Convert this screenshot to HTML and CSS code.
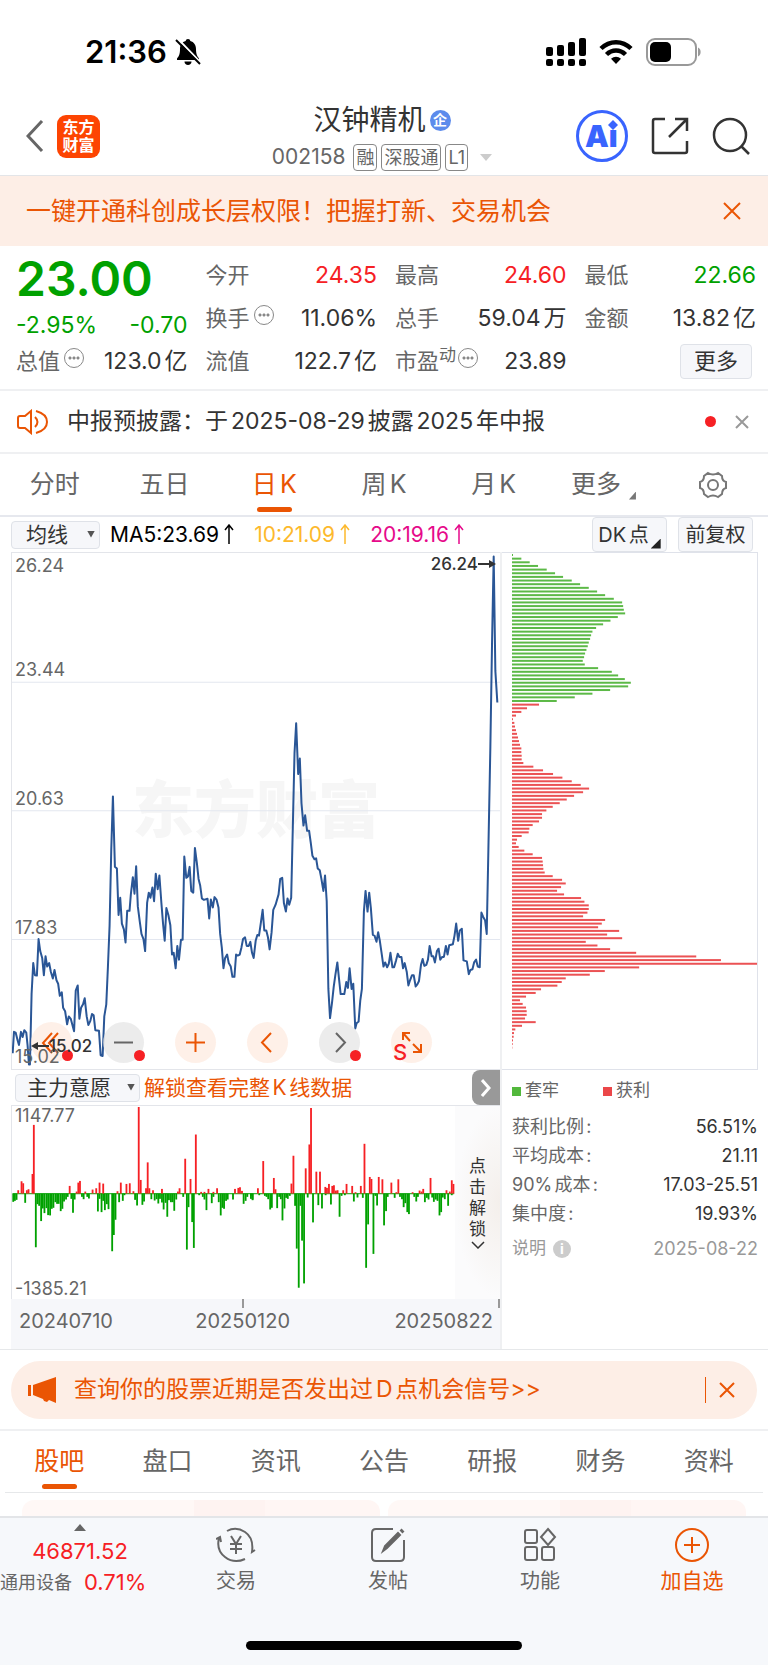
FILE: index.html
```html
<!DOCTYPE html>
<html lang="zh-CN">

<head>
    <meta charset="UTF-8">
    <meta name="viewport" content="width=device-width, initial-scale=1.0">
    <title>汉钟精机 002158</title>
    <link rel="stylesheet" href="styles.css">
</head>

<body>

    <!-- Status bar -->
    <div class="status-bar">
        <div class="clock">
            <span>21:36</span>
            <svg width="26" height="28" viewBox="0 0 26 28">
                <path d="M13 1c-1.400 0-2.200.9-2.300 2C7 4 5 7 5 11c0 5-1 7-3 9.500v1.500h22v-1.500c-2-2.500-3-4.500-3-9.500 0-4-2-7-5.700-8C15.200 1.900 14.400 1 13 1z" />
                <path d="M9.500 23.500h7c0 2-1.500 3.500-3.500 3.500s-3.500-1.500-3.500-3.500z" />
                <path d="M3 1l23 24" stroke="#fff" stroke-width="2" />
                <path d="M1 2l24 24" stroke="#000" stroke-width="2" />
            </svg>
        </div>
        <div class="system-icons">
            <svg width="40" height="28" viewBox="0 0 40 28">
                <rect x="0" y="9" width="7" height="9" rx="2" />
                <rect x="11" y="7" width="7" height="11" rx="2" />
                <rect x="22" y="4" width="7" height="14" rx="2" />
                <rect x="33" y="0" width="7" height="18" rx="2" />
                <rect x="0" y="21" width="7" height="7" rx="2" />
                <rect x="11" y="21" width="7" height="7" rx="2" />
                <rect x="22" y="21" width="7" height="7" rx="2" />
                <rect x="33" y="21" width="7" height="7" rx="2" />
            </svg>
            <svg width="34" height="26" viewBox="0 0 34 26" fill="none" stroke="#000" stroke-width="4.500">
                <path d="M2 9.500C10.500 1 23.500 1 32 9.500" />
                <path d="M7.500 15.500c5.500-5.300 13.500-5.300 19 0" />
                <path d="M17 25l-5-5.200c3-2.700 7-2.700 10 0z" fill="#000" stroke="none" />
            </svg>
            <svg width="56" height="28" viewBox="0 0 56 28">
                <rect x="1" y="1" width="49" height="26" rx="8" fill="none" stroke="#999" stroke-width="2" />
                <rect x="4" y="4" width="21" height="20" rx="5" />
                <path d="M52 9.500c3.500 1.500 3.500 7.500 0 9z" fill="#999" />
            </svg>
        </div>
    </div>

    <!-- Stock header -->
    <header class="header">
        <div class="header-left">
            <button class="icon-button" aria-label="返回">
                <svg width="18" height="32" viewBox="0 0 18 32" fill="none" stroke="#666" stroke-width="3">
                    <path d="M16 1L2 16l14 15" />
                </svg>
            </button>
            <div class="logo"><span>东方</span><span>财富</span></div>
        </div>
        <div class="stock">
            <h1>汉钟精机<span class="badge">企</span></h1>
            <div class="stock-code">
                <span class="code">002158</span>
                <span class="tag">融</span>
                <span class="tag">深股通</span>
                <span class="tag">L1</span>
                <svg class="code-arrow" width="12" height="7" viewBox="0 0 12 7">
                    <path d="M0 0h12L6 7z" fill="#ccc" />
                </svg>
            </div>
        </div>
        <div class="header-right">
            <button class="icon-button" aria-label="AI">
                <svg width="52" height="52" viewBox="0 0 52 52">
                    <circle cx="26" cy="26" r="24.500" fill="none" stroke="#3964fe" stroke-width="3" />
                    <text x="9" y="37" class="ai-text">Ai</text>
                    <circle cx="37" cy="14" r="6" fill="#fff" />
                    <path d="M37 10l5 5-5 5-5-5z" fill="#3964fe" />
                </svg>
            </button>
            <button class="icon-button" aria-label="分享">
                <svg width="38" height="38" viewBox="0 0 38 38" fill="none" stroke="#333" stroke-width="2.500">
                    <path d="M14 2H4q-2 0-2 2v30q0 2 2 2h30q2 0 2-2V24" />
                    <path d="M24 2h12v12M36 2L18 20" />
                </svg>
            </button>
            <button class="icon-button" aria-label="搜索">
                <svg width="38" height="38" viewBox="0 0 38 38" fill="none" stroke="#333" stroke-width="2.500">
                    <circle cx="18" cy="18" r="16" />
                    <path d="M29 29l8 8" />
                </svg>
            </button>
        </div>
    </header>

    <div class="promo">
        <a href="#">一键开通科创成长层权限！把握打新、交易机会</a>
        <button class="icon-button" aria-label="关闭">
            <svg width="18" height="18" viewBox="0 0 18 18" stroke="#ea5504" stroke-width="2">
                <path d="M1 1l16 16M17 1L1 17" />
            </svg>
        </button>
    </div>

    <!-- Quote -->
    <section class="quote">
        <div class="price-box">
            <div class="price">23.00</div>
            <div class="change"><span>-2.95%</span><span>-0.70</span></div>
        </div>
        <div class="item"><span class="label">今开</span><span class="up">24.35</span></div>
        <div class="item"><span class="label">最高</span><span class="up">24.60</span></div>
        <div class="item"><span class="label">最低</span><span class="down">22.66</span></div>
        <div class="item"><span class="label">换手<i class="dots"></i></span><span>11.06%</span></div>
        <div class="item"><span class="label">总手</span><span>59.04万</span></div>
        <div class="item"><span class="label">金额</span><span>13.82亿</span></div>
        <div class="item"><span class="label">总值<i class="dots"></i></span><span>123.0亿</span></div>
        <div class="item"><span class="label">流值</span><span>122.7亿</span></div>
        <div class="item"><span class="label">市盈<small>动</small><i class="dots"></i></span><span>23.89</span></div>
        <div class="item item-more"><button class="more-button">更多</button></div>
    </section>

    <div class="notice">
        <svg width="32" height="26" viewBox="0 0 32 26" fill="none" stroke="#ea5504" stroke-width="2">
            <path d="M14 2v22l-6-5H3q-2 0-2-2V9q0-2 2-2h5z" />
            <path d="M18 8q5 5 0 10M19 2q11 3 11 11T19 24" />
        </svg>
        <a href="#">中报预披露：于2025-08-29披露2025年中报</a>
        <i class="red-dot"></i>
        <button class="icon-button" aria-label="关闭">
            <svg width="14" height="14" viewBox="0 0 14 14" stroke="#999" stroke-width="2">
                <path d="M1 1l12 12M13 1L1 13" />
            </svg>
        </button>
    </div>

    <nav class="tabs period-tabs">
        <a href="#">分时</a>
        <a href="#">五日</a>
        <a href="#" class="active">日K</a>
        <a href="#">周K</a>
        <a href="#">月K</a>
        <a href="#" class="tab-more">更多</a>
        <a href="#" aria-label="设置">
            <svg width="30" height="28" viewBox="0 0 30 28" fill="none" stroke="#777" stroke-width="2">
                <path d="M10 2q5 3 10 0l4 3q0 5 4 6v6q-4 1-4 6l-4 3q-5-3-10 0l-4-3q0-5-4-6v-6q4-1 4-6z" />
                <circle cx="15" cy="14" r="5" />
            </svg>
        </a>
    </nav>

    <!-- Moving averages -->
    <div class="ma-bar">
        <label class="select-box">
            <select aria-label="指标">
                <option>均线</option>
            </select>
        </label>
        <span class="ma5">MA5:23.69<svg class="up-arrow" viewBox="0 0 10 20"><path d="M5 20V1M1 6l4-5 4 5" /></svg></span>
        <span class="ma10">10:21.09<svg class="up-arrow" viewBox="0 0 10 20"><path d="M5 20V1M1 6l4-5 4 5" /></svg></span>
        <span class="ma20">20:19.16<svg class="up-arrow" viewBox="0 0 10 20"><path d="M5 20V1M1 6l4-5 4 5" /></svg></span>
        <div class="ma-buttons">
            <button class="dk-button">DK点</button>
            <button>前复权</button>
        </div>
    </div>

    <div class="charts">
        <div class="charts-left">
            <div class="kline">
                <div class="watermark">东方财富</div>
                <svg class="plot" viewBox="33 37 1470 1501" preserveAspectRatio="none" id="kline">
                    <g class="grid">
                        <path d="M33 413H1503M33 787H1503M33 1161H1503" />
                    </g>
                </svg>
                <div class="tools">
                    <button class="tool has-dot" aria-label="最早">
                        <svg viewBox="0 0 41 41"><path d="M21 11l-9 10 9 10M27 11l-9 10 9 10" /></svg>
                    </button>
                    <button class="tool grey has-dot" aria-label="缩小">
                        <svg viewBox="0 0 41 41"><path d="M11 20.500h19" /></svg>
                    </button>
                    <button class="tool" aria-label="放大">
                        <svg viewBox="0 0 41 41"><path d="M11 20.500h19M20.500 11v19" /></svg>
                    </button>
                    <button class="tool" aria-label="向左">
                        <svg viewBox="0 0 41 41"><path d="M24 11l-9 9.500 9 9.500" /></svg>
                    </button>
                    <button class="tool grey has-dot" aria-label="向右">
                        <svg viewBox="0 0 41 41"><path d="M17 11l9 9.500-9 9.500" /></svg>
                    </button>
                    <button class="tool" aria-label="全屏">
                        <svg viewBox="0 0 41 41"><path d="M12 18v-7h7M12 11l7 8M30 22v8h-8M30 30l-8-8" /></svg>
                        <b>S</b>
                    </button>
                </div>
                <span class="scale s1">26.24</span>
                <span class="scale s2">23.44</span>
                <span class="scale s3">20.63</span>
                <span class="scale s4">17.83</span>
                <span class="scale s5">15.02</span>
                <span class="mark mark-high">26.24<svg width="18" height="8" viewBox="0 0 18 8"><path d="M0 4h14" stroke="#333" stroke-width="2" /><path d="M11 0l7 4-7 4z" fill="#333" /></svg></span>
                <span class="mark mark-low"><svg width="18" height="8" viewBox="0 0 18 8"><path d="M4 4h14" stroke="#333" stroke-width="2" /><path d="M7 0L0 4l7 4z" fill="#333" /></svg>15.02</span>
            </div>

            <div class="indicator-bar">
                <label class="select-box wide">
                    <select aria-label="副图指标">
                        <option>主力意愿</option>
                    </select>
                </label>
                <a href="#">解锁查看完整K线数据</a>
                <button class="expand" aria-label="展开">
                    <svg width="10" height="18" viewBox="0 0 10 18" fill="none" stroke="#fff" stroke-width="3">
                        <path d="M1 1l7 8-7 8" />
                    </svg>
                </button>
            </div>

            <div class="flow">
                <svg class="plot" viewBox="33 226 1470 582" preserveAspectRatio="none" id="flow"></svg>
                <span class="scale flow-max">1147.77</span>
                <span class="scale flow-min">-1385.21</span>
                <button class="unlock">
                    <span>点击解锁</span>
                    <svg width="14" height="8" viewBox="0 0 14 8" fill="none" stroke="#333" stroke-width="1.500">
                        <path d="M1 1l6 6 6-6" />
                    </svg>
                </button>
            </div>

            <div class="dates">
                <span>20240710</span>
                <span class="mid-date">20250120</span>
                <span>20250822</span>
            </div>
        </div>

        <div class="charts-right">
            <div class="chips">
                <svg viewBox="0 0 734 1551" preserveAspectRatio="none" id="chips"></svg>
            </div>
            <div class="legend">
                <span class="legend-green">套牢</span>
                <span class="legend-red">获利</span>
            </div>
            <dl class="chip-stats">
                <div><dt>获利比例:</dt><dd>56.51%</dd></div>
                <div><dt>平均成本:</dt><dd>21.11</dd></div>
                <div><dt>90%成本:</dt><dd>17.03-25.51</dd></div>
                <div><dt>集中度:</dt><dd>19.93%</dd></div>
            </dl>
            <div class="chip-note">
                <span>说明<i class="info">i</i></span>
                <span class="chip-date">2025-08-22</span>
            </div>
        </div>
    </div>

    <div class="signal-wrap">
        <div class="signal">
            <svg width="28" height="26" viewBox="0 0 28 26" fill="#ea5504">
                <path d="M0 8h3v11H0zM5 8L28 0v26l-7-3-2 2-3-1-1-2-10-4z" />
            </svg>
            <a href="#">查询你的股票近期是否发出过D点机会信号&gt;&gt;</a>
            <button class="icon-button" aria-label="关闭">
                <svg width="16" height="16" viewBox="0 0 16 16" stroke="#ea5504" stroke-width="2">
                    <path d="M1 1l14 14M15 1L1 15" />
                </svg>
            </button>
        </div>
    </div>

    <nav class="tabs info-tabs">
        <a href="#" class="active">股吧</a>
        <a href="#">盘口</a>
        <a href="#">资讯</a>
        <a href="#">公告</a>
        <a href="#">研报</a>
        <a href="#">财务</a>
        <a href="#">资料</a>
    </nav>

    <div class="cards">
        <div class="card"></div>
        <div class="card"></div>
    </div>

    <!-- Bottom bar -->
    <footer class="bottom">
        <nav class="bottom-nav">
            <a href="#" class="index">
                <svg width="12" height="7" viewBox="0 0 12 7"><path d="M0 7h12L6 0z" fill="#666" /></svg>
                <span class="index-value">46871.52</span>
                <span class="index-row"><span>通用设备</span><span class="index-value">0.71%</span></span>
            </a>
            <a href="#">
                <svg width="40" height="36" viewBox="0 0 40 36">
                    <path d="M11 4Q20-1 29 5t7 20l3-2M3 11q-3 12 6 19t20 2M0 12l4-2 1 5" />
                    <path d="M15 9l5 8 5-8M20 17v10M14 17h12M14 22h12" />
                </svg>
                交易
            </a>
            <a href="#">
                <svg width="36" height="36" viewBox="0 0 36 36">
                    <path d="M23 2H6Q2 2 2 6v24q0 4 4 4h24q4 0 4-4V13" />
                    <path d="M13 24l2-5L28 6l2 2-13 13z" fill="#666" />
                    <path d="M31 5l2-2" stroke-width="4" />
                </svg>
                发帖
            </a>
            <a href="#">
                <svg width="36" height="36" viewBox="0 0 36 36">
                    <rect x="3" y="3" width="12" height="13" rx="2" />
                    <rect x="3" y="20" width="12" height="13" rx="2" />
                    <rect x="20" y="20" width="12" height="13" rx="2" />
                    <path d="M26 2l7 8-7 8-7-8z" />
                </svg>
                功能
            </a>
            <a href="#" class="add">
                <svg width="36" height="36" viewBox="0 0 36 36">
                    <circle cx="18" cy="18" r="16" />
                    <path d="M10 18h16M18 10v16" />
                </svg>
                加自选
            </a>
        </nav>
        <div class="home-indicator"></div>
    </footer>

    <script src="charts.js"></script>
</body>

</html>
```
FILE: styles.css
```css
* {
    box-sizing: border-box;
    margin: 0;
    padding: 0;
}

body {
    font-family: Inter, "Noto Sans CJK SC", sans-serif;
    font-size: 22px;
    line-height: 1.3;
    color: #333;
    background-color: #fff;
    text-autospace: normal;
    overflow-x: hidden;
}

a {
    color: inherit;
    text-decoration: none;
}

button,
select {
    font: inherit;
    color: inherit;
    border: none;
    background: none;
    text-autospace: normal;
}

i {
    font-style: normal;
}

svg {
    display: block;
    flex-shrink: 0;
}

.icon-button {
    display: flex;
}

/* Status bar */
.status-bar {
    display: flex;
    justify-content: space-between;
    align-items: center;
    height: 96px;
    padding: 8px 66px 0 85px;
}

.clock,
.system-icons {
    display: flex;
    align-items: center;
}

.clock {
    gap: 8px;
    color: #000;
    font-size: 31px;
    font-weight: 600;
}

.system-icons {
    gap: 13px;
}

/* Header */
.header {
    display: grid;
    grid-template-columns: 1fr auto 1fr;
    align-items: center;
    height: 80px;
    padding: 0 18px 0 14px;
    border-bottom: 1px solid #e3e5e8;
}

.header-left,
.header-right {
    display: flex;
    align-items: center;
}

.header-left {
    gap: 13px;
    padding-left: 12px;
}

.header-right {
    gap: 23px;
    justify-content: flex-end;
}

.logo {
    display: flex;
    flex-direction: column;
    justify-content: center;
    align-items: center;
    width: 43px;
    height: 43px;
    border-radius: 9px;
    background-color: #fd4402;
    color: #fff;
    font-size: 16px;
    font-weight: 700;
    line-height: 18px;
}

.stock {
    padding-top: 6px;
}

.stock h1 {
    display: flex;
    justify-content: center;
    align-items: center;
    gap: 4px;
    font-size: 28px;
    font-weight: 400;
    line-height: 36px;
}

.badge {
    width: 21px;
    height: 21px;
    border-radius: 50%;
    background-color: #5c8bec;
    color: #fff;
    font-size: 14px;
    font-weight: 700;
    line-height: 20px;
    text-align: center;
}

.stock-code {
    display: flex;
    align-items: center;
    gap: 4px;
    height: 38px;
    color: #666;
    font-size: 21px;
}

.code {
    margin-right: 4px;
}

.tag {
    padding: 0 2px;
    border: 1px solid #888;
    border-radius: 4px;
    font-size: 18px;
    line-height: 25px;
}

.code-arrow {
    margin-left: 8px;
}

.ai-text {
    fill: #3964fe;
    font-size: 30px;
    font-weight: 900;
}

.promo {
    display: flex;
    justify-content: space-between;
    align-items: center;
    height: 70px;
    padding: 0 27px 0 26px;
    background-color: #fdeee6;
    color: #ea5504;
    font-size: 25px;
}

/* Quote */
.quote {
    display: grid;
    grid-template-columns: repeat(4, 1fr);
    grid-template-rows: repeat(3, 43px);
    column-gap: 18px;
    padding: 8px 12px 6px 16px;
    border-bottom: 2px solid #eff0f2;
    font-size: 23px;
}

.price-box {
    display: flex;
    flex-direction: column;
    justify-content: space-between;
    grid-row: span 2;
    color: #00a100;
}

.price {
    font-size: 48px;
    font-weight: 600;
    line-height: 50px;
}

.change {
    display: flex;
    justify-content: space-between;
    line-height: 30px;
}

.item {
    display: flex;
    justify-content: space-between;
    align-items: center;
    white-space: nowrap;
}

.label {
    display: flex;
    align-items: center;
    color: #666;
    font-size: 22px;
}

.label small {
    margin-bottom: 12px;
    font-size: 17px;
}

.dots {
    width: 20px;
    height: 20px;
    margin: 0 0 8px 4px;
    border: 1px solid #888;
    border-radius: 50%;
    background: radial-gradient(circle, #888 1px, transparent 2px) center / 4px 18px repeat-x content-box;
    padding: 0 3px;
}

.label small + .dots {
    margin-left: 2px;
}

.up,
.index-value {
    color: #f62024;
}

.down {
    color: #00a100;
}

.item-more {
    justify-content: flex-end;
    padding-right: 4px;
}

.more-button {
    height: 35px;
    padding: 0 13px;
    border: 1px solid #dfe2e8;
    border-radius: 4px;
    background-color: #f6f7fa;
    font-size: 22px;
}

.notice {
    display: flex;
    align-items: center;
    height: 63px;
    padding: 0 19px 0 17px;
    border-bottom: 2px solid #eff0f2;
    font-size: 23px;
}

.notice a {
    flex: 1;
    margin-left: 18px;
}

.red-dot {
    width: 11px;
    height: 11px;
    margin-right: 19px;
    border-radius: 50%;
    background-color: #f62024;
}

/* Tabs */
.tabs {
    display: grid;
    grid-template-columns: repeat(7, 1fr);
    height: 63px;
    color: #666;
    font-size: 25px;
}

.tabs a {
    position: relative;
    display: flex;
    justify-content: center;
    align-items: center;
}

.tabs .active {
    color: #ea5504;
}

.active::after {
    content: "";
    position: absolute;
    bottom: 3px;
    width: 35px;
    height: 5px;
    border-radius: 3px;
    background-color: #ea5504;
}

.period-tabs {
    border-bottom: 2px solid #e6e8ee;
}

.tab-more::after,
.dk-button::after {
    content: "";
    width: 7px;
    height: 8px;
    margin: 22px 0 0 8px;
    background-color: #777;
    clip-path: polygon(100% 0, 100% 100%, 0 100%);
}

/* Moving averages */
.ma-bar {
    display: flex;
    align-items: center;
    gap: 20px;
    height: 35px;
    padding: 0 15px 0 11px;
    font-size: 21px;
    white-space: nowrap;
}

.ma-bar span {
    display: flex;
    align-items: center;
    gap: 5px;
}

.ma-bar .ma5 {
    margin-left: -10px;
    color: #000;
}

.ma10 {
    color: #fdb92c;
}

.ma20 {
    color: #e60a8a;
}

.up-arrow {
    width: 10px;
    height: 20px;
    fill: none;
    stroke: currentColor;
    stroke-width: 1.5;
}

.select-box {
    position: relative;
    width: 89px;
}

.select-box.wide {
    width: 125px;
}

.select-box select {
    display: block;
    width: 100%;
    height: 28px;
    padding-left: 14px;
    border: 1px solid #dfe2e8;
    border-radius: 4px;
    background-color: #f6f7fa;
    appearance: none;
    font-size: 21px;
    line-height: 26px;
}

.select-box.wide select {
    padding-left: 11px;
}

.select-box::after {
    content: "";
    position: absolute;
    top: 10px;
    right: 5px;
    width: 8px;
    height: 7px;
    background-color: #555;
    clip-path: polygon(0 0, 100% 0, 50% 100%);
}

.ma-buttons {
    display: flex;
    gap: 11px;
    margin-left: auto;
}

.ma-buttons button {
    display: flex;
    justify-content: center;
    align-items: center;
    width: 75px;
    height: 35px;
    border: 1px solid #dfe2e8;
    border-radius: 4px;
    background-color: #f6f7fa;
    font-size: 20px;
}

.dk-button::after {
    width: 10px;
    height: 10px;
    margin: 18px 0 0 2px;
    background-color: #222;
}

/* Charts */
.charts {
    display: grid;
    grid-template-columns: 491fr 256fr;
    margin: 0 10px 0 11px;
}

.charts-left {
    border-right: 2px solid #eff0f2;
}

.kline,
.flow {
    position: relative;
    border-top: 1px solid #e3e5ea;
    border-left: 1px solid #e3e5ea;
}

.kline {
    height: 518px;
    border-bottom: 1px solid #e3e5ea;
}

.flow {
    height: 194px;
}

.plot {
    position: relative;
    width: 100%;
    height: 100%;
}

.grid path {
    fill: none;
    stroke: #e3e7f0;
    stroke-width: 1;
    vector-effect: non-scaling-stroke;
}

.price-line {
    fill: none;
    stroke: #2a5696;
    stroke-width: 2;
    stroke-linejoin: round;
    vector-effect: non-scaling-stroke;
}

.watermark {
    position: absolute;
    top: 213px;
    left: 120px;
    color: #f6f6f6;
    font-size: 62px;
    font-weight: 900;
    line-height: 90px;
}

.scale {
    position: absolute;
    left: 3px;
    color: #666;
    font-size: 18px;
    line-height: 20px;
}

.s1 {
    top: 3px;
}

.s2 {
    top: 107px;
}

.s3 {
    top: 236px;
}

.s4 {
    top: 365px;
}

.s5 {
    bottom: 2px;
}

.flow-max {
    top: 0;
}

.flow-min {
    bottom: 0;
}

.mark {
    position: absolute;
    display: flex;
    align-items: center;
    color: #333;
    font-size: 17px;
    font-weight: 500;
    line-height: 20px;
}

.mark-high {
    top: 1px;
    right: 4px;
}

.mark-low {
    bottom: 13px;
    left: 19px;
}

.tools {
    position: absolute;
    bottom: 6px;
    left: 19px;
    display: flex;
    gap: 31px;
}

.tool {
    position: relative;
    width: 41px;
    height: 41px;
    border-radius: 50%;
    background-color: rgba(253, 234, 222, 0.7);
}

.tool.grey {
    background-color: rgba(228, 228, 228, 0.7);
}

.tool svg {
    fill: none;
    stroke: #ea5504;
    stroke-width: 2;
}

.tool.grey svg {
    stroke: #666;
}

.has-dot::after {
    content: "";
    position: absolute;
    right: -1px;
    bottom: 2px;
    width: 11px;
    height: 11px;
    border-radius: 50%;
    background-color: #f62024;
}

.tool b {
    position: absolute;
    bottom: -4px;
    left: 2px;
    color: #f62024;
    font-size: 22px;
    font-weight: 500;
}

.indicator-bar {
    display: flex;
    align-items: center;
    gap: 4px;
    height: 35px;
    padding-left: 4px;
    color: #ea5504;
    font-size: 21px;
}

.indicator-bar select {
    color: #333;
}

.expand {
    display: flex;
    justify-content: center;
    align-items: center;
    width: 28px;
    height: 35px;
    margin-left: auto;
    border-radius: 8px 0 0 8px;
    background-color: #999;
}

.unlock {
    position: absolute;
    top: 0;
    right: 0;
    display: flex;
    flex-direction: column;
    justify-content: center;
    align-items: center;
    gap: 1px;
    width: 45px;
    height: 100%;
    background: radial-gradient(ellipse at center right, #f4efeb, #fbfbfc 70%);
}

.unlock span {
    width: 18px;
    font-size: 17px;
    line-height: 21px;
}

.dates {
    display: flex;
    justify-content: space-between;
    height: 50px;
    padding: 0 7px 0 8px;
    background:
        linear-gradient(#999, #999) 47.5% 0 / 2px 9px no-repeat,
        linear-gradient(#999, #999) right 0 top 0 / 2px 9px no-repeat,
        #f6f7fa;
    color: #666;
    font-size: 20px;
    line-height: 44px;
}

.mid-date {
    margin-right: 22px;
}

.charts-right {
    padding-left: 10px;
    font-size: 17px;
}

.chips {
    height: 518px;
    margin-left: -10px;
    padding-left: 10px;
    border: 1px solid #dfe2ea;
    border-left: none;
}

.chips svg {
    width: 100%;
    height: 100%;
}

.legend {
    display: flex;
    gap: 44px;
    height: 42px;
    color: #666;
    line-height: 40px;
}

.legend span::before {
    content: "";
    display: inline-block;
    width: 9px;
    height: 9px;
    margin-right: 4px;
    background-color: #52b83c;
}

.legend .legend-red::before {
    background-color: #eb4749;
}

.chip-stats div,
.chip-note {
    display: flex;
    justify-content: space-between;
    line-height: 29px;
}

.chip-stats,
.chip-date {
    font-size: 18px;
}

.chip-stats dt {
    color: #666;
}

.chip-note {
    margin-top: 6px;
    color: #999;
}

.chip-note span {
    display: flex;
    align-items: center;
}

.info {
    width: 18px;
    height: 18px;
    margin-left: 7px;
    border-radius: 50%;
    background-color: #ccc;
    color: #fff;
    font-size: 14px;
    font-weight: 700;
    line-height: 18px;
    text-align: center;
}

/* Signal banner */
.signal-wrap {
    padding: 11px 11px 10px;
    border-top: 1px solid #e6e8ea;
    border-bottom: 2px solid #eff0f2;
}

.signal {
    display: flex;
    align-items: center;
    height: 58px;
    padding: 0 22px 0 17px;
    border-radius: 29px;
    background-color: #fdeee6;
    color: #ea5504;
    font-size: 23px;
}

.signal a {
    flex: 1;
    margin-left: 18px;
}

.signal .icon-button {
    padding: 5px 0 5px 13px;
    border-left: 1px solid #ea5504;
}

.info-tabs {
    height: 62px;
    margin: 0 5px;
    border-bottom: 1px solid #e6e8ea;
}

.cards {
    display: grid;
    grid-template-columns: 1fr 1fr;
    gap: 8px;
    padding: 7px 22px 0;
}

.card {
    height: 16px;
    border-radius: 12px 12px 0 0;
    background: linear-gradient(90deg, #fff8f6 48%, #fef3f1 48%, #fef3f1 68%, #fff6f4 68%);
}

/* Bottom bar */
.bottom {
    height: 149px;
    border-top: 2px solid #e3e5e8;
    background-color: #f6f8fb;
}

.bottom-nav {
    display: grid;
    grid-template-columns: 160fr 152fr 152fr 152fr 152fr;
    height: 123px;
}

.bottom-nav a {
    display: flex;
    flex-direction: column;
    align-items: center;
    padding-top: 9px;
    color: #666;
    font-size: 20px;
    line-height: 36px;
}

.bottom-nav a > svg {
    fill: none;
    stroke: #666;
    stroke-width: 2;
}

.bottom-nav .add {
    color: #ea5504;
    font-size: 21px;
}

.bottom-nav .add svg {
    stroke: #ea5504;
}

.bottom-nav .index {
    padding-top: 6px;
    line-height: 31px;
}

.bottom-nav .index svg {
    margin-bottom: 5px;
    stroke: none;
}

.index-value {
    font-size: 22px;
}

.index-row {
    display: flex;
    gap: 12px;
    align-self: flex-start;
    font-size: 18px;
    white-space: nowrap;
}

.home-indicator {
    width: 36%;
    height: 9px;
    margin: 0 auto;
    border-radius: 5px;
    background-color: #000;
}
```
FILE: charts.js
```js
const SVG = 'http://www.w3.org/2000/svg';

function add(parent, tag, attrs) {
    const el = document.createElementNS(SVG, tag);
    for (const key in attrs) el.setAttribute(key, attrs[key]);
    parent.appendChild(el);
}

// Each series is split in two pages, the second one starts PAGE units further
const PAGE = 750;

function parse(first, second) {
    const read = (text, offset) => text.trim().split(/\s+/).map(p => {
        const [x, y] = p.split(',').map(Number);
        return [x + offset, y];
    });
    return read(first, 0).concat(read(second, PAGE));
}

// Daily K
const price = parse(`
35,1492 39,1430 44,1432 50,1455 54,1468 60,1430 65,1445 70,1425 76,1432 80,1470 84,1525 87,1525 92,1320 97,1230
102,1265 108,1266 113,1160 118,1195 124,1215 129,1265 134,1210 139,1240 145,1230 150,1255 156,1275 161,1250
167,1280 172,1290 177,1325 183,1315 187,1360 193,1370 199,1408 204,1385 210,1392 215,1410 220,1428 225,1310
231,1295 236,1392 241,1360 247,1350 252,1332 258,1385 263,1410 269,1398 274,1378 279,1382 284,1425 295,1427
300,1498 306,1500 311,1385 317,1350 322,1240 327,1120 332,900 337,745 343,950 349,955 354,1090 359,1040
364,1115 370,1132 375,1170 380,1078 387,1078 391,1030 397,980 402,1028 407,948 412,1065 418,1110 423,1145
429,1160 434,1195 440,1055 445,1025 450,1040 456,1010 461,1050 466,970 472,1015 477,975 483,1055 488,1115
493,1165 498,1070 504,1090 510,1120 515,1205 520,1200 526,1245 531,1180 536,1220 542,1162 547,1162 552,920
558,982 563,978 568,950 573,1020 579,1025 584,895 590,940 595,985 600,1005 605,1042 611,1046 622,1043
627,1100 632,1045 638,1068 643,1038 649,1045 655,1068 660,1145 665,1185 670,1245 675,1215 681,1205 686,1230
692,1240 697,1270 703,1270 708,1205 713,1208 719,1205 724,1185 729,1160 735,1155 740,1180 746,1180 751,1168
756,1200 761,1215`, `
17,1165 22,1148 27,1150 33,1110 38,1075 43,1135 49,1135 54,1155 59,1190 65,1140 70,1075 77,1060 86,1030
91,985 97,982 102,1055 108,1080 113,1042 118,1060 124,1040 129,830 134,620 139,532 145,680 150,635 155,765
161,830 166,800 172,845 178,845 183,880 188,918 194,928 199,925 204,955 210,960 215,985 221,1020 226,975
231,1050 236,1305 241,1390 247,1345 252,1300 257,1265 263,1228 268,1275 273,1320 284,1320 290,1285 295,1302
300,1245 306,1305 311,1290 317,1420 321,1405 327,1400 332,1340 337,1305 343,1080 348,1020 354,1080 359,1025
364,1070 370,1148 375,1150 381,1168 386,1140 391,1165 397,1205 402,1240 407,1228 413,1242 418,1232 423,1200
429,1242 434,1242 440,1222 445,1203 450,1212 456,1212 461,1245 466,1230 472,1255 477,1295 482,1280 488,1265
493,1265 499,1298 504,1292 509,1282 515,1235 520,1218 525,1238 531,1235 536,1220 541,1180 547,1210 552,1210
557,1228 563,1195 568,1188 573,1220 579,1212 584,1212 590,1180 595,1205 600,1178 611,1175 616,1150 621,1115
627,1165 632,1135 638,1130 643,1222 653,1225 659,1262 664,1250 670,1248 675,1228 681,1220 686,1240 692,1242
697,1083 702,1095 708,1105 713,1145 718,900 724,600 729,300 734,47 739,380 745,472`);

add(document.getElementById('kline'), 'polyline', {
    class: 'price-line',
    points: price.map(p => p.join(',')).join(' ')
});

// Main force: bars above and below the zero line
const ZERO = 490;
const flow = parse(`
37,515 42,512 47,509 73,518 105,652 110,522 115,527 121,573 126,535 131,549 137,534 142,555 148,556 153,536
158,533 164,516 169,521 174,521 180,543 185,536 190,514 196,508 201,500 212,506 217,548 222,508 244,500
249,507 260,500 265,505 292,544 297,506 303,546 308,512 313,540 319,522 324,537 335,664 340,615 345,569
356,516 367,512 372,495 404,509 410,526 426,524 431,514 453,507 463,511 469,507 474,520 479,506 485,517
490,538 496,518 501,560 506,510 512,516 517,516 522,542 528,508 549,500 560,659 565,531 576,576 581,654
597,495 608,500 613,508 619,540 635,519 640,500 656,516 662,556 667,533 672,536 678,512 683,508 699,508
731,521 737,512 742,500 753,506 758,508
52,480 62,453 67,459 78,480 83,477 95,431 99,283 207,467 228,484 233,457 238,452 254,484 276,478 287,474
297,457 308,460 351,483 361,457 378,461 388,459 399,483 415,229 421,449 437,474 442,396 447,474 458,480
485,476 533,484 538,474 555,385 571,446 587,312 603,485 613,485 625,476 640,485 651,474 705,476 715,473
720,471 726,482`, `
3,497 8,510 28,495 45,497 50,500 55,507 61,538 66,533 82,534 88,500 93,507 98,571 104,535 109,503 114,506
120,497 136,527 141,656 147,774 152,527 157,632 163,761 174,502 190,577 206,525 217,535 228,495 244,523
270,560 276,497 286,495 313,514 324,502 340,503 350,714 356,583 372,672 378,497 383,526 404,586 410,543
415,500 436,503 452,500 458,507 463,531 468,519 474,546 479,552 495,500 501,514 506,500 527,516 533,503
538,508 549,502 554,515 560,508 565,512 571,556 576,546 581,502 587,507 597,527 608,495
24,474 40,392 72,443 77,477 125,460 131,376 168,414 179,342 184,232 200,424 211,424 227,470 232,473 238,461
248,467 253,465 259,481 264,480 281,480 291,461 308,467 318,486 334,467 345,340 361,440 366,446 388,440
399,447 426,457 441,486 447,447 490,486 511,481 517,484 522,476 544,443 592,480 602,484 608,450 613,461`);

const flowSvg = document.getElementById('flow');
add(flowSvg, 'rect', { x: 35, y: ZERO - 1, width: 1330, height: 3, fill: '#00a100' });
flow.forEach(([x, y]) => {
    add(flowSvg, 'rect', {
        x: x - 3,
        y: Math.min(y, ZERO),
        width: 5.5,
        height: Math.abs(y - ZERO),
        fill: y > ZERO ? '#00a100' : '#f62024'
    });
});

// Chip distribution
const trapped = [3, 28, 53, 78, 104, 129, 153, 179, 204, 230, 255, 279, 305, 330, 333, 335, 339, 317, 295, 273, 252,
    241, 237, 234, 230, 227, 223, 219, 216, 212, 218, 258, 299, 318, 338, 356, 348, 294, 241, 188, 134];
const profit = [81, 45, 28, 12, 3, 7, 9, 12, 15, 18, 21, 24, 28, 28, 29, 29, 34, 64, 93, 123, 151, 179, 206, 231, 213,
    186, 164, 143, 122, 103, 90, 90, 81, 62, 52, 50, 29, 15, 12, 20, 37, 62, 90, 92, 93, 94, 98, 122, 150, 161, 147,
    135, 156, 207, 217, 230, 230, 226, 213, 279, 269, 258, 321, 285, 330, 221, 256, 294, 372, 552, 626, 734, 381,
    278, 233, 161, 149, 136, 87, 71, 42, 24, 32, 42, 44, 44, 39, 71, 30, 10, 6, 5, 3, 2, 1];

const chipSvg = document.getElementById('chips');
trapped.concat(profit).forEach((width, i) => {
    add(chipSvg, 'rect', {
        x: 0,
        y: 3 + i * 10.97,
        width,
        height: 6,
        fill: i < trapped.length ? '#5cb947' : '#eb5254'
    });
});
```
